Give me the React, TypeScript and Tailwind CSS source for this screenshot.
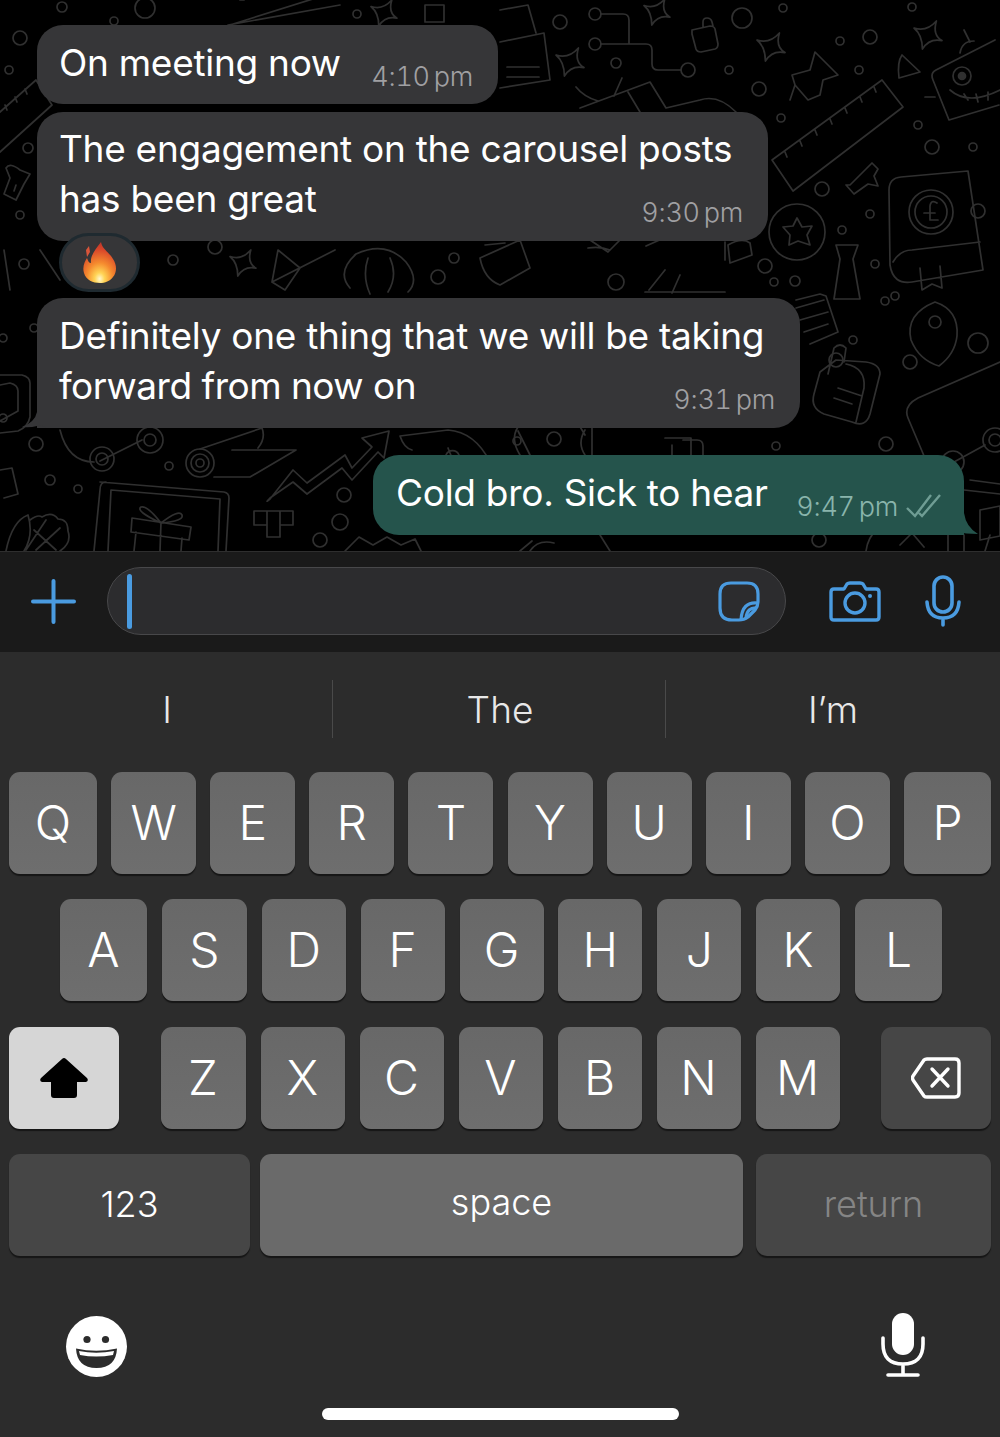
const sparkles: [number, number, number][] = [
  [384, 13, 13], [657, 12, 13], [570, 62, 14], [771, 47, 14], [928, 35, 14], [243, 263, 13],
];
const circles: [number, number, number][] = [
  [62, 7, 5], [145, 8, 10], [114, 21, 4], [20, 38, 7], [9, 70, 4], [357, 14, 4], [28, 148, 5], [20, 215, 4], [24, 264, 5],
  [215, 247, 7], [173, 260, 5], [438, 277, 7], [454, 258, 5], [560, 22, 7], [742, 18, 10], [783, 8, 4], [912, 7, 4],
  [840, 41, 4], [870, 37, 7], [616, 63, 5], [729, 70, 4], [759, 89, 7], [859, 70, 4], [781, 118, 4], [918, 125, 4],
  [932, 147, 7], [973, 147, 4], [822, 189, 7], [870, 214, 4], [842, 230, 4], [765, 266, 7], [774, 282, 4], [795, 281, 5],
  [875, 264, 4], [978, 211, 7], [616, 282, 8], [36, 444, 7], [50, 480, 5], [78, 489, 4], [169, 466, 4], [344, 495, 7],
  [340, 522, 8], [517, 441, 4], [554, 439, 7], [776, 446, 4], [886, 444, 7], [853, 340, 4], [885, 301, 4], [895, 296, 4],
  [910, 362, 7], [978, 343, 10], [3, 338, 4], [34, 328, 4], [3, 418, 4], [320, 540, 7], [819, 540, 7],
];

function Doodles() {
  return (
    <svg className="absolute inset-0" width="1000" height="551" fill="none" stroke="#303030" strokeWidth="1.7" strokeLinejoin="round" strokeLinecap="round">
      {circles.map(([x, y, r]) => <circle key={`${x}-${y}`} cx={x} cy={y} r={r} />)}
      {sparkles.map(([x, y, s]) => (
        <path key={`${x}-${y}`} d={`M${x - s} ${y - s * 0.5}Q${x - s * 0.1} ${y - s * 0.2} ${x + s * 0.6} ${y - s}Q${x + s * 0.3} ${y} ${x + s} ${y + s * 0.4}Q${x + s * 0.1} ${y + s * 0.2} ${x - s * 0.4} ${y + s}Q${x - s * 0.4} ${y} ${x - s} ${y - s * 0.5}Z`} />
      ))}
      {/* top strip */}
      <path d="M230 25L335 -8M340 5L228 25M240 0h4M255 -3h4" />
      <path d="M425 22h19v-17h-19zM425 22v-17" />
      <path d="M0 112L36 80L52 105L0 152M5 105l2 5M15 97l2 5M25 89l2 5" />
      {/* documents and circuit */}
      <path d="M500 10L528 5L536 33M500 42L544 33L550 80L500 88M507 67h32M507 77h32" />
      <circle cx="595" cy="14" r="6" />
      <circle cx="595" cy="44" r="6" />
      <circle cx="688" cy="70" r="7" />
      <path d="M601 14h22q6 0 6 6v24M601 44h45q6 0 6 6v14q0 6 6 6h23" />
      <path d="M692 30l18 -4q4 0 5 3l3 15q0 4 -3 5l-14 3q-4 0 -5 -3l-4 -15q0 -3 0 -4zM703 27v-5q0 -4 4 -4q4 0 5 4l1 4" />
      <path d="M580 108L650 82L666 108L700 100q18 -6 36 12M628 92L640 112M576 87q8 10 22 14M622 78l-8 18" />
      {/* pin */}
      <path d="M815 52L838 75L823 80L820 95L808 100L795 85L792 75L810 70ZM795 85L790 100" />
      {/* ruler */}
      <path d="M772 160L882 80L903 107L793 191ZM785 152l2 5M800 141l2 5M815 130l2 5M830 119l2 5M845 108l2 5M860 97l2 5M874 87l2 5" />
      <path d="M850 185l16 -16l6 -6l6 6l-4 7l4 10l-10 -2l-14 10l-8 -9z" />
      <circle cx="797" cy="232" r="28" />
      <path d="M797 218l5 9l10 -1l-5 9l3 10l-12 -4l-9 4l1 -10l-7 -8l10 -1z" />
      {/* robot */}
      <path d="M936 70L995 40M936 70q-6 3 -3 10l16 40l50 -15M960 53q2 -12 14 -12M964 30l6 12" />
      <circle cx="962" cy="76" r="9" />
      <circle cx="962" cy="76" r="3.5" fill="#303030" />
      <path d="M950 90q18 16 50 0M968 100l-4 -6M978 102l-2 -8M988 100v-8M925 97h10" />
      <path d="M902 55L920 72L899 78Q897 62 902 55Z" />
      {/* book */}
      <path d="M889 190Q889 178 901 177L968 171L983 270L912 282Q893 285 890 265ZM893 262Q900 250 912 250L980 242M920 268l2 22l10 -6l10 4l-2 -22" />
      <circle cx="931" cy="212" r="22" />
      <circle cx="931" cy="212" r="16" />
      <path d="M937 203q-6 -4 -7 3v14h8M924 213h11" />
      <path d="M836 245h22l-5 14l7 40h-26l6 -40z" />
      {/* centre below bubble 2 */}
      <path d="M278 250L300 268L285 290L272 282ZM335 250L272 282M350 288q-14 -16 6 -34q30 -14 50 8q14 18 2 30M368 258q-6 18 2 36M390 258q8 18 -2 34" />
      <path d="M480 258L520 240L530 268L500 285q-16 -6 -20 -27zM485 245l20 -2" />
      <path d="M646 246l18 -8M665 270l-16 20M645 292h80M680 275l-8 18M590 240l18 12l12 -12M610 250q-10 -4 -22 -2" />
      <path d="M728 245q14 -8 22 -2l2 12l-22 8zM725 242v18" />
      <path d="M4 250L10 290M40 250L60 280" />
      {/* right below bubble 3 */}
      <path d="M796 300l24 -6l6 2l12 36l-28 12M796 308l28 -8M800 320l28 -8M804 332l24 -8" />
      <path d="M935 302q24 8 22 34q-2 18 -18 30q-20 -6 -28 -26q-6 -26 24 -38z" />
      <circle cx="935" cy="322" r="6" />
      <path d="M820 372l16 -12l30 2q14 2 14 12l-10 40q-4 14 -18 8l-28 -8q-14 -6 -10 -20zM828 374l6 -26q6 -6 12 0l-2 14M838 388l24 8M834 398l18 6M846 364q20 4 18 24l-8 34" />
      <circle cx="836" cy="360" r="7" />
      <path d="M1000 362L918 398Q903 406 908 418L930 470M930 470q20 6 24 -6M954 462L985 445" />
      <circle cx="953" cy="462" r="11" />
      <circle cx="995" cy="440" r="12" />
      <circle cx="995" cy="440" r="6" />
      {/* bottom left */}
      <path d="M60 430q8 32 34 32M100 461L142 440" />
      <circle cx="102" cy="459" r="12" />
      <circle cx="102" cy="459" r="6" />
      <circle cx="150" cy="440" r="13" />
      <circle cx="150" cy="440" r="6" />
      <circle cx="200" cy="463" r="14" />
      <circle cx="200" cy="463" r="9" />
      <circle cx="200" cy="463" r="4" />
      <path d="M200 449L262 428M214 477h36L296 450H232M262 428q4 10 -4 20" />
      <path d="M270 498Q264 504 270 499L293 470L307 483L345 455L352 468L372 447L362 438L389 431L384 458L378 452L352 480L342 468L307 494L293 482Z" />
      <path d="M100 482L224 492Q229 493 229 498L226 551M94 551L100 490Q100 482 106 482M111 490L220 499L218 551M108 551L111 490" />
      <path d="M132 518L191 527L189 540L131 532ZM136 532L134 551M182 538L181 551M161 522L160 551M161 523q-14 -18 -20 -16q-6 4 20 16q18 -14 21 -8q2 6 -21 8" />
      <path d="M254 511h39v14h-13v12h-13v-12h-13zM267 511v14M280 511v14" />
      <path d="M6 551q6 -30 22 -36q6 20 -4 36M30 520q8 -6 12 -3q10 -6 16 2q10 0 10 12q4 12 -8 20M34 530l22 20M46 520l-20 30M60 528l-24 22" />
      <path d="M0 375h22q8 2 8 8v34q-2 10 -12 14l-18 2M0 385l10 -2q8 2 8 8v20l-18 10" />
      <path d="M0 470l12 -2l6 26l-14 4" />
      <path d="M400 436L448 430Q475 432 490 462M400 436q4 12 12 14M448 448l4 10M446 455a7 7 0 0 1 13 0" />
      <path d="M585 435l-6 -10M585 455q-8 -12 0 -25M592 425v40M665 438h26v26" />
      <path d="M683 440h14q6 0 6 6v18M672 445v18" />
      <path d="M520 455q-10 -16 -2 -28M530 455l-12 -24" />
      <path d="M345 551l14 -14l14 8l14 -8l14 8l14 -6l6 12" />
      <path d="M970 480L1000 484M964 490l36 4M980 510l20 -4l0 30l-20 4zM990 535L985 551M866 551q2 -14 10 -20M948 551v-16M964 551v-16M900 545l12 -12l12 14" />
      <path d="M520 551l12 -10M530 551q8 -12 24 -8M610 551l-10 -16" />
      <path d="M20 170q-10 -8 -14 -2l4 10l-6 16l12 6l8 -16l6 -10zM16 185l-2 6" />
    </svg>
  );
}

function Flame() {
  return (
    <svg width="36" height="43" viewBox="0 0 36 43">
      <defs>
        <radialGradient id="flame" cx="0.5" cy="0.9" r="0.95">
          <stop offset="0" stopColor="#fff8d0" />
          <stop offset="0.16" stopColor="#ffd455" />
          <stop offset="0.42" stopColor="#f58a2e" />
          <stop offset="0.75" stopColor="#d9472a" />
          <stop offset="1" stopColor="#b5302a" />
        </radialGradient>
      </defs>
      <path fill="url(#flame)" d="M19 1C20 8 27 11 31 18C35 24 35 31 31 36C28 40 23 42 18 42C11 42 4 39 2 32C0 26 3 20 5 17C6 20 7 22 9 22C8 15 13 9 19 1Z" />
      <path fill="#d9553a" d="M4 9L7 5L8 11L5 16Z" />
    </svg>
  );
}

function Time({ label, color = "text-[#a0a0a3]" }: { label: string; color?: string }) {
  return <span className={`whitespace-nowrap text-[27px] font-light leading-[32px] tabular-nums [word-spacing:-3px] ${color}`}>{label}</span>;
}

function ChatArea() {
  return (
    <div className="relative h-[551px] overflow-hidden bg-black">
      <Doodles />
      <div className="relative flex flex-col whitespace-nowrap pl-[37px] pr-[36px] pt-[25px] text-[37px] leading-[50px] tracking-[-0.28px] text-white">
        <div className="flex h-[79px] w-[461px] justify-between rounded-[26px] bg-[#363638] pl-[22px] pr-[25px] pt-[13px]">
          <span>On meeting now</span>
          <span className="pt-[10px]"><Time label="4:10 pm" /></span>
        </div>

        <div className="mt-[8px] h-[129px] w-[731px] rounded-[26px] bg-[#363638] pl-[22px] pr-[25px] pt-[12px]">
          <div>The engagement on the carousel posts</div>
          <div className="flex justify-between">
            <span>has been great</span>
            <span className="pt-[10px]"><Time label="9:30 pm" /></span>
          </div>
        </div>

        <div className="relative z-10 ml-[22px] mt-[-8px] flex h-[59px] w-[81px] items-center justify-center rounded-[30px] border-[3px] border-[#1f2a30] bg-[#363638]">
          <Flame />
        </div>

        <div className="relative mt-[6px] h-[130px] w-[763px] rounded-[26px] rounded-bl-none bg-[#363638] pl-[22px] pr-[25px] pt-[13px]">
          <svg className="absolute bottom-0 left-[-15px]" width="40" height="32" viewBox="0 0 40 32">
            <path fill="#363638" d="M15 0V16Q13 26 0 31Q8 32 15 30Q19 28 24 32H40V0Z" />
          </svg>
          <div className="relative">Definitely one thing that we will be taking</div>
          <div className="relative flex justify-between">
            <span className="tracking-[-0.5px]">forward from now on</span>
            <span className="pt-[10px]"><Time label="9:31 pm" /></span>
          </div>
        </div>

        <div className="relative mt-[27px] flex h-[80px] w-[591px] self-end justify-between rounded-[26px] rounded-br-none bg-[#25544c] pl-[23px] pr-[22px] pt-[13px]">
          <svg className="absolute bottom-0 right-[-14px]" width="40" height="32" viewBox="0 0 40 32">
            <path fill="#25544c" d="M26 0V10Q28 24 40 31Q28 31 18 29L12 32H0V0Z" />
          </svg>
          <span className="relative">Cold bro. Sick to hear</span>
          <span className="relative flex items-start gap-[8px] pt-[23px]">
            <Time label="9:47 pm" color="text-[#8ab5ac]" />
            <svg className="mt-[3px]" width="36" height="24" viewBox="0 0 36 24" fill="none" stroke="#6f9d94" strokeWidth="2.4">
              <path d="M1 14L9 22L25 1M13 19L16 22L34 1" />
            </svg>
          </span>
        </div>
      </div>
    </div>
  );
}

function InputBar() {
  return (
    <div className="flex h-[101px] items-center border-t border-[#2e2e2e] bg-[#1a1a1a] pb-[2px] pl-[31px]">
      <svg width="45" height="45" viewBox="0 0 45 45" stroke="#4a9be0" strokeWidth="4" strokeLinecap="round">
        <path d="M22.5 2V43M2 22.5H43" />
      </svg>
      <div className="ml-[31px] flex h-[68px] w-[679px] items-center justify-between rounded-[34px] border border-[#48484a] bg-[#2c2c2e] pl-[19px] pr-[25px]">
        <div className="h-[55px] w-[5px] rounded-full bg-[#4a9be0]" />
        <svg width="42" height="41" viewBox="0 0 42 41" fill="none" stroke="#4a9be0" strokeWidth="3.2" strokeLinejoin="round">
          <path d="M13 2H29Q40 2 40 13V21Q40 25 37 29L30 36Q26 39 21 39H14Q2 39 2 27V13Q2 2 13 2Z" />
          <path d="M40 22Q24 20 23 39M39 27Q29 26 28 37" />
        </svg>
      </div>
      <svg className="ml-[43px]" width="52" height="41" viewBox="0 0 52 41" fill="none" stroke="#4a9be0" strokeWidth="3.4" strokeLinejoin="round">
        <path d="M5 8H15L18 3Q19 2 21 2H31Q33 2 34 3L37 8H47Q50 8 50 11V36Q50 39 47 39H5Q2 39 2 36V11Q2 8 5 8Z" />
        <circle cx="26" cy="22" r="10" />
        <circle cx="41" cy="15" r="2" fill="#4a9be0" stroke="none" />
      </svg>
      <svg className="ml-[44px]" width="36" height="52" viewBox="0 0 36 52" fill="none" stroke="#4a9be0" strokeWidth="3.6" strokeLinecap="round">
        <rect x="9" y="2" width="18" height="35" rx="9" />
        <path d="M2 27Q3 43 18 43Q33 43 34 27M18 43V50" />
      </svg>
    </div>
  );
}

function Key({ label, w }: { label: string; w: number }) {
  return (
    <div
      className="flex h-[102px] items-center justify-center rounded-[11px] bg-gradient-to-b from-[#686868] to-[#6e6e6e] text-[48px] font-light text-white shadow-[0_2px_1px_#161616]"
      style={{ width: w }}
    >
      {label}
    </div>
  );
}

const rowOne: [string, number][] = [["Q", 88], ["W", 85], ["E", 85], ["R", 85], ["T", 85], ["Y", 85], ["U", 85], ["I", 85], ["O", 85], ["P", 87]];
const rowTwo: [string, number][] = [["A", 87], ["S", 85], ["D", 84], ["F", 84], ["G", 84], ["H", 84], ["J", 84], ["K", 84], ["L", 87]];
const rowThree: [string, number][] = [["Z", 85], ["X", 84], ["C", 84], ["V", 84], ["B", 84], ["N", 84], ["M", 84]];

function Keyboard() {
  return (
    <div className="flex flex-1 flex-col bg-[#2c2c2c]">
      <div className="mt-[28px] flex h-[58px] items-center text-[37px] font-light text-[#e8e8e8]">
        <div className="flex h-full w-[333px] items-center justify-center border-r border-[#4a4a4a] pl-[2px] pt-[2px]">I</div>
        <div className="flex h-full w-[333px] items-center justify-center border-r border-[#4a4a4a] pl-[2px] pt-[2px]">The</div>
        <div className="flex h-full w-[334px] items-center justify-center pt-[2px]">I’m</div>
      </div>

      <div className="mt-[34px] flex justify-between pl-[9px] pr-[9px]">
        {rowOne.map(([k, w]) => <Key key={k} label={k} w={w} />)}
      </div>
      <div className="mt-[25px] flex justify-between pl-[60px] pr-[58px]">
        {rowTwo.map(([k, w]) => <Key key={k} label={k} w={w} />)}
      </div>
      <div className="mt-[26px] flex justify-between pl-[9px] pr-[9px]">
        <div className="flex h-[102px] w-[110px] items-center justify-center rounded-[11px] bg-[#d6d6d6] shadow-[0_2px_1px_#161616]">
          <svg width="48" height="42" viewBox="0 0 48 42">
            <path fill="#000" strokeLinejoin="round" d="M24 1Q25 1 26 2L47 21Q49 24 46 25H37V38Q37 41 34 41H14Q11 41 11 38V25H2Q-1 24 1 21L22 2Q23 1 24 1Z" />
          </svg>
        </div>
        <div className="flex w-[679px] justify-between">
          {rowThree.map(([k, w]) => <Key key={k} label={k} w={w} />)}
        </div>
        <div className="flex h-[102px] w-[110px] items-center justify-center rounded-[11px] bg-[#464646] shadow-[0_2px_1px_#161616]">
          <svg width="50" height="42" viewBox="0 0 50 42" fill="none" stroke="#fff" strokeWidth="3.4" strokeLinejoin="round" strokeLinecap="round">
            <path d="M16 2H44Q48 2 48 6V36Q48 40 44 40H16Q14 40 13 39L2 23Q1 21 2 19L13 3Q14 2 16 2Z" />
            <path d="M21 12L37 29M37 12L21 29" />
          </svg>
        </div>
      </div>
      <div className="mt-[25px] flex pl-[9px] pr-[9px] text-[36px] font-light">
        <div className="flex h-[102px] w-[241px] items-center justify-center rounded-[11px] bg-[#464646] pb-[2px] text-white shadow-[0_2px_1px_#161616]">123</div>
        <div className="ml-[10px] flex h-[102px] w-[483px] items-center justify-center rounded-[11px] bg-[#6a6a6a] pb-[6px] text-white shadow-[0_2px_1px_#161616]">space</div>
        <div className="ml-[13px] flex h-[102px] w-[235px] items-center justify-center rounded-[11px] bg-[#464646] pb-[2px] text-[#858585] shadow-[0_2px_1px_#161616]">return</div>
      </div>

      <div className="mt-[57px] flex items-start justify-between pl-[66px] pr-[75px]">
        <svg className="mt-[3px]" width="61" height="61" viewBox="0 0 61 61">
          <circle cx="30.5" cy="30.5" r="30.5" fill="#fff" />
          <circle cx="21" cy="23.5" r="3.6" fill="#2c2c2c" />
          <circle cx="39.5" cy="23.5" r="3.6" fill="#2c2c2c" />
          <path fill="#2c2c2c" d="M10 32.5Q30 37 51 32.5Q50 52 30.5 52Q11 52 10 32.5Z" />
          <path fill="#fff" d="M13 35Q30 38.5 48 35L47 39Q30 42 14 39Z" />
        </svg>
        <svg width="44" height="64" viewBox="0 0 44 64" fill="none">
          <rect x="11" y="0" width="22" height="42" rx="11" fill="#fff" />
          <path d="M2 25V31Q2 51 22 51Q42 51 42 31V25M22 51V62M7 62H37" stroke="#fff" strokeWidth="3.6" strokeLinecap="round" />
        </svg>
      </div>

      <div className="mx-auto mt-[31px] h-[12px] w-[357px] rounded-full bg-white" />
    </div>
  );
}

export default function App() {
  return (
    <div className="flex h-[1437px] w-[1000px] flex-col overflow-hidden font-['Inter',sans-serif]">
      <ChatArea />
      <InputBar />
      <Keyboard />
    </div>
  );
}
